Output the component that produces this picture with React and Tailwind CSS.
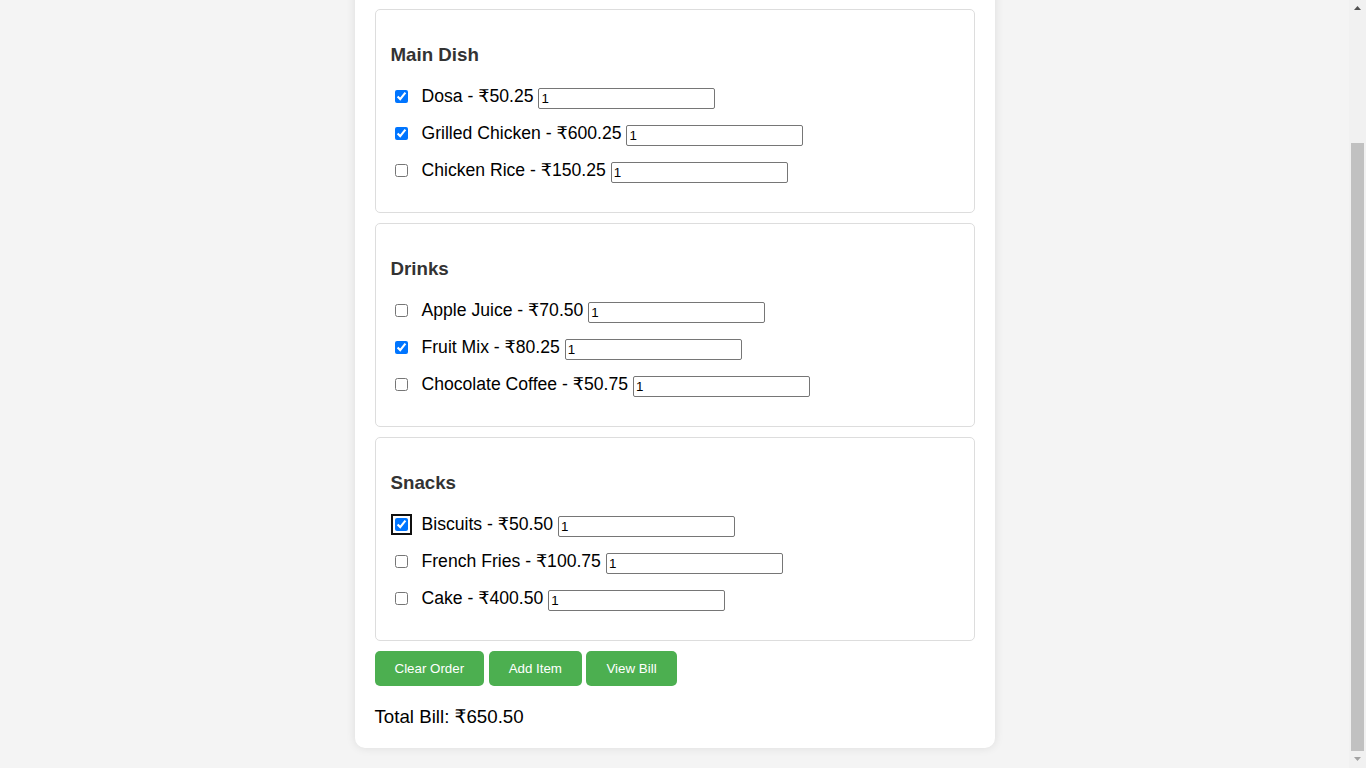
import React, { useState } from "react";

const MENU = [
  {
    title: "Main Dish",
    items: [
      { name: "Dosa", price: "50.25", checked: true },
      { name: "Grilled Chicken", price: "600.25", checked: true },
      { name: "Chicken Rice", price: "150.25", checked: false },
    ],
  },
  {
    title: "Drinks",
    items: [
      { name: "Apple Juice", price: "70.50", checked: false },
      { name: "Fruit Mix", price: "80.25", checked: true },
      { name: "Chocolate Coffee", price: "50.75", checked: false },
    ],
  },
  {
    title: "Snacks",
    items: [
      { name: "Biscuits", price: "50.50", checked: true, focused: true },
      { name: "French Fries", price: "100.75", checked: false },
      { name: "Cake", price: "400.50", checked: false },
    ],
  },
];

const MenuRow = ({ item }) => {
  const [checked, setChecked] = useState(item.checked);
  return (
    <div className="flex h-[27px] items-center">
      <input
        type="checkbox"
        checked={checked}
        onChange={() => setChecked(!checked)}
        className={
          "m-0 ml-[4px] mr-[14px] h-[13px] w-[13px] rounded-[2px] accent-[#0075ff] " +
          (item.focused ? "outline-2 outline-offset-[2px] outline-[#101010]" : "")
        }
      />
      <span className="text-[17.6px] leading-[21px] text-black">
        {item.name} - ₹{item.price}
      </span>
      <input
        type="text"
        defaultValue="1"
        className="ml-[5px] mt-[3px] h-[21px] w-[177px] rounded-[2px] border border-[#767676] bg-white px-[2px] text-[13.33px] leading-[15px] text-black"
      />
    </div>
  );
};

const MenuSection = ({ section }) => (
  <div className="rounded-[5px] border border-[#dddddd] px-[15px] pt-[15px] pb-[15px]">
    <h3 className="mt-[19px] mb-[17px] text-[18.72px] font-bold leading-[22px] text-[#333333]">
      {section.title}
    </h3>
    <div className="mb-[13px] flex flex-col gap-[10px]">
      {section.items.map((item) => (
        <MenuRow key={item.name} item={item} />
      ))}
    </div>
  </div>
);

// window scrollbar, drawn since the headless page shows none
const Scrollbar = () => (
  <div className="flex h-screen w-[17px] shrink-0 flex-col bg-[#f1f1f1]">
    <div className="flex h-[17px] items-center justify-center">
      <svg width="7" height="5" viewBox="0 0 7 5">
        <path d="M3.5 0 L7 4 L0 4 Z" fill="#505050" />
      </svg>
    </div>
    <div className="flex flex-1 flex-col justify-end">
      <div className="mx-[2px] h-[608px] bg-[#c1c1c1]" />
    </div>
    <div className="flex h-[17px] items-center justify-center">
      <svg width="7" height="5" viewBox="0 0 7 5">
        <path d="M0 0 L7 0 L3.5 4 Z" fill="#a3a3a3" />
      </svg>
    </div>
  </div>
);

export default function App() {
  return (
    <div
      className="flex h-screen bg-[#f4f4f4]"
      style={{ fontFamily: '"Liberation Sans", Arial, "DejaVu Sans", sans-serif' }}
    >
      <div className="flex min-w-0 flex-1 flex-col-reverse overflow-y-auto [scrollbar-width:none]">
        <div className="px-[20px] pt-[20px] pb-[20px]">
          <div className="mx-auto w-[640px] rounded-[10px] bg-white p-[20px] shadow-[0_0_10px_rgba(0,0,0,0.1)]">
            <div className="flex h-[137px] flex-col items-center justify-center gap-2">
              <h1 className="text-[32px] font-bold text-[#333333]">Restaurant Order</h1>
              <p className="text-[16px] text-[#555555]">Select your items and quantity</p>
            </div>

            <div className="flex flex-col gap-[10px]">
              {MENU.map((section) => (
                <MenuSection key={section.title} section={section} />
              ))}
            </div>

            <div className="mt-[10px] flex gap-[4.5px]">
              <button className="h-[35px] rounded-[5px] bg-[#4caf50] px-[20px] text-[13.33px] text-white">
                Clear Order
              </button>
              <button className="h-[35px] rounded-[5px] bg-[#4caf50] px-[20px] text-[13.33px] text-white">
                Add Item
              </button>
              <button className="h-[35px] rounded-[5px] bg-[#4caf50] px-[20px] text-[13.33px] text-white">
                View Bill
              </button>
            </div>

            <p className="mt-[20px] text-[18.72px] leading-[22px] text-black">
              Total Bill: ₹650.50
            </p>
          </div>
        </div>
      </div>
      <Scrollbar />
    </div>
  );
}
